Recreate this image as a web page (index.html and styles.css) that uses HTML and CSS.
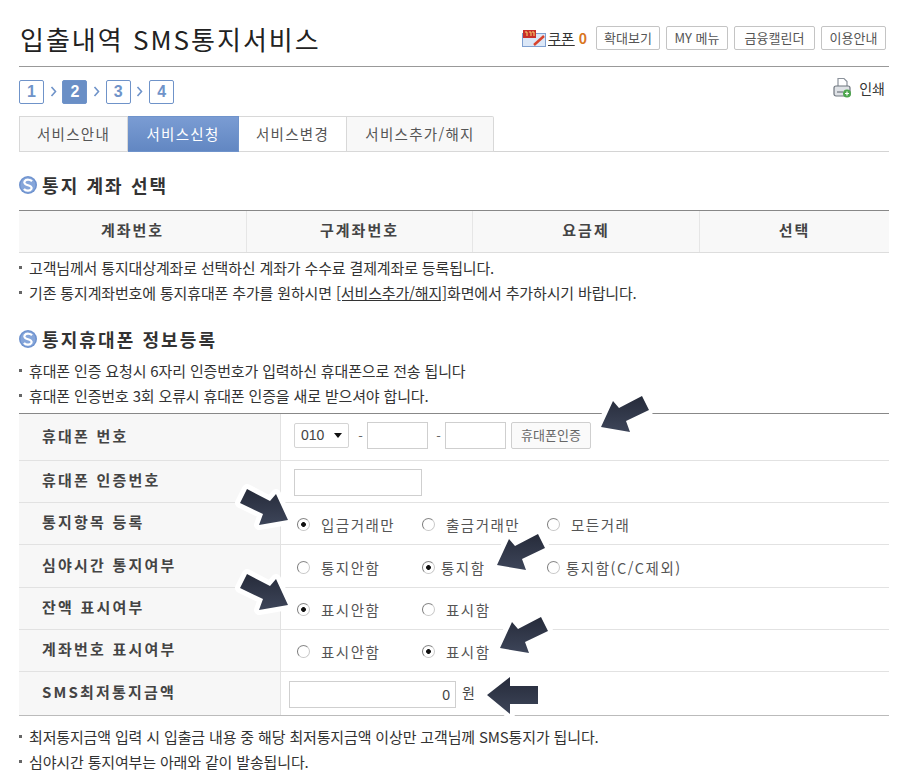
FILE: index.html
```html
<!DOCTYPE html>
<html lang="ko">
<head>
<meta charset="utf-8">
<title>입출내역 SMS통지서비스</title>
<link rel="stylesheet" href="styles.css">
</head>
<body>
<svg width="0" height="0" class="defs">
  <defs>
    <symbol id="bullet" viewBox="0 0 18 18">
      <circle cx="9" cy="9" r="9" fill="#6f93cf"/>
      <circle cx="9" cy="9" r="7.500" fill="#86a6da"/>
      <path d="M13 5.200C11.500 3.400 7 3 5.600 5.400 4.600 7.200 6.400 8.400 9 9.200c2.600.8 4.400 2 3.400 3.800C11 15.400 6.500 15 5 12.800" fill="none" stroke="#fff" stroke-width="2.200"/>
    </symbol>
  </defs>
</svg>
<div class="page">
  <header class="top">
    <h1 class="title">입출내역 SMS통지서비스</h1>
    <div class="tools">
      <svg class="coupon" width="24" height="18" viewBox="0 0 24 18">
        <rect x="0.500" y="4.500" width="23" height="13" fill="#dbe7f7" stroke="#7fa0d0"/>
        <rect x="1" y="1" width="13" height="8" fill="#c9302a"/>
        <path d="M3 3h2v4M7 3h2v4M10 3h2v4" stroke="#f5d76e" stroke-width="1" fill="none"/>
        <path d="M12 16L22 7" stroke="#d8432c" stroke-width="2.500"/>
      </svg>
      <a class="coupon-link">쿠폰</a>
      <b class="coupon-count">0</b>
      <a class="tool-btn btn-a">확대보기</a>
      <a class="tool-btn btn-b">MY 메뉴</a>
      <a class="tool-btn btn-c">금융캘린더</a>
      <a class="tool-btn btn-d">이용안내</a>
    </div>
  </header>

  <div class="step-row">
    <ol class="steps">
      <li class="step">1</li><li class="sep"><svg width="7" height="11" viewBox="0 0 7 11"><path d="M1.500 1L5.500 5.500 1.500 10" fill="none" stroke="#6f93c9" stroke-width="1.600"/></svg></li>
      <li class="step on">2</li><li class="sep"><svg width="7" height="11" viewBox="0 0 7 11"><path d="M1.500 1L5.500 5.500 1.500 10" fill="none" stroke="#6f93c9" stroke-width="1.600"/></svg></li>
      <li class="step">3</li><li class="sep"><svg width="7" height="11" viewBox="0 0 7 11"><path d="M1.500 1L5.500 5.500 1.500 10" fill="none" stroke="#6f93c9" stroke-width="1.600"/></svg></li>
      <li class="step">4</li>
    </ol>
    <a class="print">
      <svg width="19" height="21" viewBox="0 0 19 21">
        <path d="M5 9V1.500h6l3 3V9" fill="#fff" stroke="#8b929b" stroke-width="1.200"/>
        <rect x="1" y="9" width="16" height="10" rx="2" fill="#dfe2e6" stroke="#6f767e" stroke-width="1.200"/>
        <path d="M4 15h6" stroke="#6f767e" stroke-width="1.200"/>
        <circle cx="14" cy="16.500" r="4" fill="#4da64d"/>
        <path d="M12 16.500h4M14 14.500v4" stroke="#fff" stroke-width="1.200"/>
      </svg>
      <span>인쇄</span>
    </a>
  </div>

  <nav class="tabs">
    <a class="tab tab-1">서비스안내</a>
    <a class="tab tab-2 on">서비스신청</a>
    <a class="tab tab-3">서비스변경</a>
    <a class="tab tab-4">서비스추가/해지</a>
  </nav>

  <h2 class="sec sec-1"><svg class="bullet"><use href="#bullet"/></svg>통지 계좌 선택</h2>
  <div class="acct">
    <div class="acct-h">계좌번호</div>
    <div class="acct-h">구계좌번호</div>
    <div class="acct-h">요금제</div>
    <div class="acct-h">선택</div>
  </div>
  <ul class="notes notes-1">
    <li>고객님께서 통지대상계좌로 선택하신 계좌가 수수료 결제계좌로 등록됩니다.</li>
    <li>기존 통지계좌번호에 통지휴대폰 추가를 원하시면 <u>[서비스추가/해지]</u>화면에서 추가하시기 바랍니다.</li>
  </ul>

  <h2 class="sec sec-2"><svg class="bullet"><use href="#bullet"/></svg>통지휴대폰 정보등록</h2>
  <ul class="notes notes-2">
    <li>휴대폰 인증 요청시 6자리 인증번호가 입력하신 휴대폰으로 전송 됩니다</li>
    <li>휴대폰 인증번호 3회 오류시 휴대폰 인증을 새로 받으셔야 합니다.</li>
  </ul>

  <div class="form">
    <div class="row r-48">
      <div class="lbl">휴대폰 번호</div>
      <div class="val val-top">
        <span class="sel">010<i class="caret"></i></span>
        <span class="dash">-</span><input class="inp inp-s" type="text">
        <span class="dash">-</span><input class="inp inp-s" type="text">
        <a class="cert">휴대폰인증</a>
      </div>
    </div>
    <div class="row r-42">
      <div class="lbl">휴대폰 인증번호</div>
      <div class="val val-low"><input class="inp inp-m" type="text"></div>
    </div>
    <div class="row r-42">
      <div class="lbl">통지항목 등록</div>
      <div class="val val-low">
        <label class="opt"><input type="radio" name="a" checked>입금거래만</label>
        <label class="opt"><input type="radio" name="a">출금거래만</label>
        <label class="opt"><input type="radio" name="a">모든거래</label>
      </div>
    </div>
    <div class="row r-43">
      <div class="lbl">심야시간 통지여부</div>
      <div class="val val-low">
        <label class="opt"><input type="radio" name="b">통지안함</label>
        <label class="opt tight"><input type="radio" name="b" checked>통지함</label>
        <label class="opt tight"><input type="radio" name="b">통지함(C/C제외)</label>
      </div>
    </div>
    <div class="row r-42">
      <div class="lbl">잔액 표시여부</div>
      <div class="val val-low">
        <label class="opt"><input type="radio" name="c" checked>표시안함</label>
        <label class="opt"><input type="radio" name="c">표시함</label>
      </div>
    </div>
    <div class="row r-42">
      <div class="lbl">계좌번호 표시여부</div>
      <div class="val val-low">
        <label class="opt"><input type="radio" name="d">표시안함</label>
        <label class="opt"><input type="radio" name="d" checked>표시함</label>
      </div>
    </div>
    <div class="row r-43 last">
      <div class="lbl">SMS최저통지금액</div>
      <div class="val val-amt val-low">
        <input class="inp inp-l" type="text" value="0"><span class="won">원</span>
      </div>
    </div>
  </div>
  <ul class="notes notes-3">
    <li>최저통지금액 입력 시 입출금 내용 중 해당 최저통지금액 이상만 고객님께 SMS통지가 됩니다.</li>
    <li>심야시간 통지여부는 아래와 같이 발송됩니다.</li>
  </ul>

  <svg class="arrows" width="898" height="779" viewBox="0 0 898 779">
    <defs>
      <linearGradient id="ag" x1="0" y1="0" x2="0" y2="1">
        <stop offset="0" stop-color="#262b3a"/>
        <stop offset="1" stop-color="#3d4559"/>
      </linearGradient>
      <path id="ar" d="M0 0L12 -26 18 -19 41 -31 48 -17 25 -6 29 5Z"/>
    </defs>
    <g class="arrow-set">
      <use href="#ar" x="601" y="427"/>
      <use href="#ar" x="497" y="565"/>
      <use href="#ar" x="500" y="648"/>
      <use href="#ar" transform="translate(288 520) scale(-1 1)"/>
      <use href="#ar" transform="translate(288 605) scale(-1 1)"/>
      <path d="M487 695L510 677V686H538V704H510V714Z"/>
    </g>
  </svg>
</div>
</body>
</html>
```
FILE: styles.css
```css
html, body {
  margin: 0;
  padding: 0;
  height: 779px;
  overflow: hidden;
  background: #fff;
}
body {
  font-family: "Noto Sans CJK KR", "Liberation Sans", sans-serif;
  color: #333;
}
.defs { position: absolute; }
.page {
  position: relative;
  width: 870px;
  height: 779px;
  padding-left: 19px;
  box-sizing: content-box;
}
.top {
  display: flex;
  justify-content: space-between;
  align-items: flex-start;
  height: 66px;
  border-bottom: 1px solid #999;
}
.title {
  margin: 20px 0 0 1px;
  font-size: 26px;
  line-height: 38px;
  font-weight: 400;
  color: #222;
  letter-spacing: 2px;
  white-space: nowrap;
}
.tools {
  display: flex;
  align-items: center;
  margin-top: 26px;
  height: 24px;
  padding-right: 3px;
}
.coupon { margin-right: 2px; }
.coupon-link {
  font-size: 14px;
  color: #333;
  text-decoration: underline;
  letter-spacing: 0.5px;
}
.coupon-count {
  color: #d9761f;
  font-size: 14px;
  margin: 0 9px 0 4px;
}
.tool-btn {
  box-sizing: border-box;
  height: 24px;
  line-height: 21px;
  border: 1px solid #c4c4c4;
  border-radius: 2px;
  font-size: 13px;
  color: #555;
  text-align: center;
  margin-right: 6px;
  white-space: nowrap;
}
.tool-btn:last-child { margin-right: 0; }
.btn-a { width: 64px; }
.btn-b { width: 62px; }
.btn-c { width: 81px; }
.btn-d { width: 65px; }

.step-row {
  display: flex;
  justify-content: space-between;
  align-items: flex-start;
  padding-top: 13px;
  height: 36px;
}
.steps {
  display: flex;
  list-style: none;
  margin: 0;
  padding: 0;
}
.step {
  box-sizing: border-box;
  width: 25px;
  height: 24px;
  line-height: 21px;
  border: 1px solid #6f93c9;
  border-radius: 2px;
  text-align: center;
  font-family: "Liberation Sans", sans-serif;
  font-weight: 700;
  font-size: 16px;
  color: #6f93c9;
}
.step.on { background: #6a8fc6; color: #fff; }
.sep {
  display: flex;
  align-items: center;
  justify-content: center;
  width: 18.400px;
  height: 22px;
}
.print {
  display: flex;
  align-items: center;
  gap: 7px;
  margin-top: -3px;
  padding-right: 4px;
  font-size: 14px;
  color: #333;
}
.tabs {
  display: flex;
  height: 35px;
  border-bottom: 1px solid #d4d4d4;
}
.tab {
  box-sizing: border-box;
  height: 36px;
  line-height: 33px;
  text-align: center;
  font-size: 14.500px;
  color: #555;
  background: #f8f8f8;
  border: 1px solid #d8d8d8;
  border-left: 0;
  letter-spacing: 1.3px;
}
.tab-1 { width: 109px; border-left: 1px solid #d8d8d8; }
.tab-2 { width: 111px; }
.tab-3 { width: 108px; background: #fff; }
.tab-4 { width: 147px; border-top-right-radius: 2px; }
.tab.on {
  background: linear-gradient(#7a9cd3, #6287c2);
  border-color: #6f93cb;
  color: #fff;
}
.sec {
  display: flex;
  align-items: center;
  gap: 5px;
  margin: 0;
  font-size: 18px;
  line-height: 24px;
  font-weight: 700;
  color: #333;
  letter-spacing: 2.1px;
}
.bullet { width: 18px; height: 18px; flex: none; }
.sec-1 { margin-top: 21px; }
.sec-2 { margin-top: 22px; }
.acct {
  display: grid;
  grid-template-columns: 227px 226px 227px 190px;
  height: 41px;
  margin-top: 13px;
  border-top: 1px solid #888;
  border-bottom: 1px solid #ddd;
  background: #f8f8f8;
}
.acct-h {
  text-align: center;
  line-height: 38px;
  font-size: 15px;
  font-weight: 700;
  color: #444;
  letter-spacing: 2px;
  border-left: 1px solid #e6e6e6;
}
.acct-h:first-child { border-left: 0; }
.notes {
  list-style: none;
  margin: 0;
  padding: 0;
  font-size: 15px;
  line-height: 25px;
  color: #333;
  letter-spacing: -0.15px;
}
.notes li {
  position: relative;
  padding-left: 10px;
  white-space: nowrap;
}
.notes li::before {
  content: "";
  position: absolute;
  left: 0;
  top: 11px;
  width: 3px;
  height: 3px;
  background: #666;
}
.notes-1 { margin-top: 2px; }
.notes-2 { margin-top: 7px; }
.notes-3 { margin-top: 8px; }
.form {
  margin-top: 5px;
  border-top: 1px solid #888;
  border-bottom: 1px solid #bbb;
}
.row {
  display: flex;
  box-sizing: border-box;
  border-bottom: 1px solid #e2e2e2;
}
.row.last { border-bottom: 0; }
.r-48 { height: 47px; }
.r-42 { height: 42px; }
.r-43 { height: 43px; }
.lbl {
  box-sizing: border-box;
  width: 262px;
  flex: none;
  padding-left: 23px;
  display: flex;
  align-items: center;
  background: #f7f7f7;
  border-right: 1px solid #e2e2e2;
  font-size: 15px;
  font-weight: 700;
  color: #444;
  letter-spacing: 2.2px;
  padding-bottom: 4px;
  white-space: nowrap;
}
.val {
  display: flex;
  align-items: center;
  padding-left: 13px;
  flex: 1;
}
.val-top { padding-bottom: 4px; }
.val-low { padding-top: 2px; }
.sel {
  box-sizing: border-box;
  width: 55px;
  height: 25px;
  border: 1px solid #d4d4d4;
  border-radius: 2px;
  display: flex;
  align-items: center;
  justify-content: space-between;
  padding: 0 6px;
  font-family: "Liberation Sans", sans-serif;
  font-size: 14px;
  color: #444;
  margin-right: 5px;
}
.caret {
  width: 0;
  height: 0;
  border: 4px solid transparent;
  border-top: 5px solid #111;
  border-bottom: 0;
}
.dash {
  font-size: 13px;
  color: #666;
  width: 13px;
  text-align: center;
}
.inp {
  box-sizing: border-box;
  border: 1px solid #cfcfcf;
  background: #fff;
  outline: none;
  padding: 0 5px;
  margin: 0;
  font-family: "Liberation Sans", sans-serif;
  font-size: 14px;
  color: #444;
}
.inp-s { width: 61px; height: 27px; margin-right: 4px; }
.inp-m { width: 128px; height: 27px; }
.inp-l { width: 167px; height: 27px; text-align: right; }
.cert {
  box-sizing: border-box;
  width: 80px;
  height: 27px;
  line-height: 24px;
  margin-left: 1px;
  border: 1px solid #cfcfcf;
  border-radius: 2px;
  background: #fafafa;
  text-align: center;
  font-size: 13px;
  color: #666;
}
.opt {
  display: inline-flex;
  align-items: center;
  width: 125px;
  font-size: 14.500px;
  color: #555;
  letter-spacing: 1.5px;
  white-space: nowrap;
  margin-left: 3px;
  margin-right: -3px;
}
.opt input {
  appearance: none;
  box-sizing: border-box;
  width: 13px;
  height: 13px;
  margin: 0 11px 0 0;
  border-radius: 50%;
  border: 1px solid #c8c8c8;
  border-left-color: #777;
  border-top-color: #888;
  background: #fff;
  flex: none;
}
.opt input:checked {
  background: radial-gradient(circle, #111 0 2px, #fff 2.800px);
}
.opt.tight input { margin-right: 6px; }
.val-amt { padding-left: 8px; }
.won {
  margin-left: 6px;
  font-size: 14px;
  color: #444;
  padding-bottom: 6px;
}
.arrows {
  position: absolute;
  left: 0;
  top: 0;
  pointer-events: none;
}
.arrow-set {
  fill: url(#ag);
  stroke: #fff;
  stroke-width: 10px;
  stroke-linejoin: round;
  paint-order: stroke;
}
```
